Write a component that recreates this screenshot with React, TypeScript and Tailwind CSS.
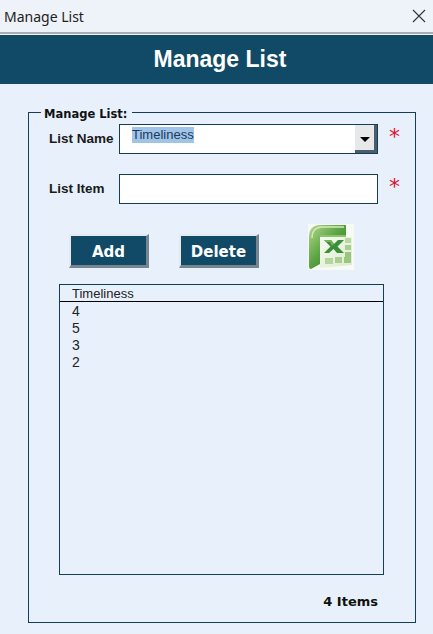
const items = ["4", "5", "3", "2"];

function ExcelIcon() {
    return (
        <svg width="46" height="46" viewBox="0 0 46 46" className="block">
            <defs>
                <linearGradient id="xlBack" x1="0" y1="0" x2="1" y2="1">
                    <stop offset="0" stopColor="#b4d98e" />
                    <stop offset="0.45" stopColor="#5da545" />
                    <stop offset="1" stopColor="#1f6e28" />
                </linearGradient>
                <linearGradient id="xlSheet" x1="0" y1="0" x2="1" y2="1">
                    <stop offset="0" stopColor="#f6faf0" />
                    <stop offset="1" stopColor="#dcebd0" />
                </linearGradient>
            </defs>
            <rect width="46" height="46" fill="#f7fbf4" />
            <path d="M1 13C1 5 5 1 13 1H38V11H16C13 11 12 12 12 15V40L3 45C1.500 45 1 44 1 42Z" fill="url(#xlBack)" />
            <path d="M4 14C4 7 8 3 14 3H36" fill="none" stroke="#d3ebba" strokeWidth="1.500" />
            <path d="M12 13H44V41L12 44Z" fill="url(#xlSheet)" />
            <path d="M12 13H38V11H15C13 11 12 12 12 13Z" fill="#8cc26a" />
            <path d="M16 16H23L26 20L30 16H36L29.500 22.500L36 29H29L25.500 25L21 29H16L22.500 22.500Z" fill="#3d8e3a" />
            <path d="M16 16H23L26 20L24 22L22 18H18Z" fill="#74b356" />
            <rect x="37" y="14" width="6" height="5" fill="#b9d9a3" />
            <rect x="37" y="21" width="6" height="5" fill="#a8cf8e" />
            <rect x="37" y="28" width="6" height="5" fill="#9ac681" />
            <rect x="17" y="34" width="8" height="6" fill="#b4d59c" />
            <rect x="27" y="33" width="7" height="6" fill="#a8cf8e" />
            <rect x="36" y="33" width="7" height="6" fill="#9ac681" />
        </svg>
    );
}

function FieldRow({ label, children }: { label: string; children: React.ReactNode }) {
    return (
        <div className="flex items-center h-[30px]">
            <label className="w-[90px] pl-[20px] shrink-0 whitespace-nowrap text-[13.500px] font-bold text-[#1a1a1a] font-['Liberation_Sans',sans-serif]">
                {label}
            </label>
            <div className="w-[259px] h-[30px] bg-white border border-[#123f56] flex">
                {children}
            </div>
            <span className="ml-[11px] text-[22px] leading-[30px] h-[30px] -mt-[4px] text-[#e0102f] font-['DejaVu_Sans',sans-serif]">*</span>
        </div>
    );
}

function ActionButton({ label }: { label: string }) {
    return (
        <button className="w-[80px] h-[34px] pt-[2px] bg-[#114a66] border-t-2 border-l-2 border-t-[#e4e9ee] border-l-[#e4e9ee] border-b-[3px] border-r-[3px] border-b-[#76858e] border-r-[#76858e] text-white text-[15px] leading-[20px] font-bold font-['DejaVu_Sans',sans-serif]">
            {label}
        </button>
    );
}

export default function App() {
    return (
        <div className="w-[433px] h-[634px] overflow-hidden flex flex-col bg-[#e8f1fb] font-['Noto_Sans',sans-serif]">
            <div className="h-[32px] shrink-0 bg-[#eef3f9] flex items-center justify-between pl-[4px] pr-[7px] text-[14px] text-[#222222]">
                <span>Manage List</span>
                <svg width="14" height="14" viewBox="0 0 14 14" fill="none" stroke="#333333" strokeWidth="1.100">
                    <path d="M1 1L13 13M13 1L1 13" />
                </svg>
            </div>
            <div className="h-[3px] shrink-0 bg-[#a8adb2] border-b border-[#f2f5f8]" />
            <div className="h-[49px] shrink-0 pl-[7px] bg-[#114a66] flex items-center justify-center text-white text-[23px] font-bold font-['Liberation_Sans',sans-serif]">
                Manage List
            </div>

            <fieldset className="mt-[19px] ml-[28px] w-[388px] h-[520px] border border-[#123f56] flex flex-col">
                <legend className="ml-[12px] pl-[3px] pr-[5px] pt-[4px] text-[11.500px] leading-[15px] font-bold text-[#111111] font-['DejaVu_Sans',sans-serif]">
                    Manage List:
                </legend>

                <div className="mt-[2px] flex flex-col gap-[20px]">
                    <FieldRow label="List Name">
                        <div className="flex-1 pl-[12px] pt-[2px]">
                            <span className="block w-fit bg-[#9fc4e6] text-[13px] leading-[16px] text-[#1b3a5c] font-['Liberation_Sans',sans-serif]">Timeliness</span>
                        </div>
                        <div className="w-[22px] bg-[#e6e8ea] border-b-[3px] border-r-[3px] border-[#4a5f6b] flex items-center justify-center">
                            <span className="w-0 h-0 mt-[4px] border-x-[5px] border-x-transparent border-t-[5px] border-t-black" />
                        </div>
                    </FieldRow>
                    <FieldRow label="List Item">
                        <div className="flex-1" />
                    </FieldRow>
                </div>

                <div className="mt-[30px] ml-[40px] flex items-start gap-[30px] h-[34px]">
                    <ActionButton label="Add" />
                    <ActionButton label="Delete" />
                    <div className="ml-[19px] -mt-[10px]">
                        <ExcelIcon />
                    </div>
                </div>

                <div className="mt-[16px] ml-[30px] w-[325px] h-[291px] border border-[#123f56] flex flex-col text-[14px] leading-[17px] text-[#222222] font-['Liberation_Sans',sans-serif]">
                    <div className="h-[17px] shrink-0 border-b border-black pl-[12px] pt-[1px] text-[13px] leading-[16px]">Timeliness</div>
                    <ul className="pl-[12px] pt-[1px]">
                        {items.map(item => (
                            <li key={item}>{item}</li>
                        ))}
                    </ul>
                </div>

                <div className="mt-[19px] pr-[37px] text-right text-[13px] leading-[16px] font-bold text-[#111111] font-['DejaVu_Sans',sans-serif]">
                    4 Items
                </div>
            </fieldset>
        </div>
    );
}
